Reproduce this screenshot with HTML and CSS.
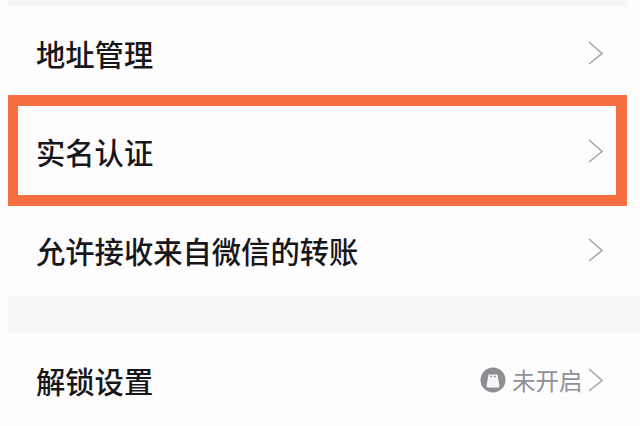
FILE: index.html
```html
<!DOCTYPE html>
<html lang="zh-CN">
<head>
<meta charset="utf-8">
<title>设置</title>
<link rel="stylesheet" href="styles.css">
</head>
<body>
<main class="page">
  <div class="band band-top"></div>
  <div class="row row-first">
    <span class="label">地址管理</span>
    <svg class="chev" viewBox="0 0 15 24"><path d="M1 1l13 11.500L1 23"/></svg>
  </div>
  <div class="row row-marked">
    <span class="label">实名认证</span>
    <svg class="chev" viewBox="0 0 15 24"><path d="M1 1l13 11.500L1 23"/></svg>
  </div>
  <div class="row row-third">
    <span class="label">允许接收来自微信的转账</span>
    <svg class="chev" viewBox="0 0 15 24"><path d="M1 1l13 11.500L1 23"/></svg>
  </div>
  <div class="band band-mid"></div>
  <div class="row row-last">
    <span class="label">解锁设置</span>
    <span class="status">
      <svg class="lock" viewBox="0 0 26 26">
        <circle cx="13" cy="13" r="12.500" fill="#8e8d92"/>
        <path d="M8.500 7.500h9l2 11.500a1.500 1.500 0 0 1-1.500 1.500H8a1.500 1.500 0 0 1-1.500-1.500z" fill="#f7f7f9"/>
        <path d="M10.500 9.500h1.500M14 9.500h1.500" stroke="#77767b" stroke-width="1.500"/>
      </svg>
      <span class="status-text">未开启</span>
    </span>
    <svg class="chev" viewBox="0 0 15 24"><path d="M1 1l13 11.500L1 23"/></svg>
  </div>
</main>
</body>
</html>
```
FILE: styles.css
```css
* { box-sizing: border-box; }
html, body { margin: 0; height: 100%; background: #fdfdfe; overflow: hidden; }
body { font-family: "Noto Sans CJK SC", "Noto Sans", sans-serif; }
.page { width: 640px; height: 426px; padding-left: 8px; display: flex; flex-direction: column; }
.band { background: #f6f7f9; flex: none; }
.band-top { height: 7px; width: 620px; }
.band-mid { height: 37px; width: 632px; }
.row { display: flex; align-items: center; padding: 0 24px 0 28px; width: 619px; flex: none; }
.row-first { height: 88px; padding-top: 4px; }
.row-marked { height: 111px; border: 11px solid #f66f40; border-left-width: 10px; padding-left: 18px; padding-right: 13px; }
.row-third { height: 90px; padding-bottom: 2px; }
.row-last { height: 93px; }
.label { font-size: 29.300px; line-height: 40px; font-weight: 500; color: #17171b; flex: 1; white-space: nowrap; }
.chev { width: 15px; height: 24px; flex: none; fill: none; stroke: #a6a6ad; stroke-width: 1.600; }
.status { display: flex; align-items: center; margin-right: 6px; }
.lock { width: 26px; height: 26px; flex: none; margin-right: 6px; }
.status-text { font-size: 23.500px; line-height: 32px; color: #8f8f96; width: 70px; white-space: nowrap; }
```
